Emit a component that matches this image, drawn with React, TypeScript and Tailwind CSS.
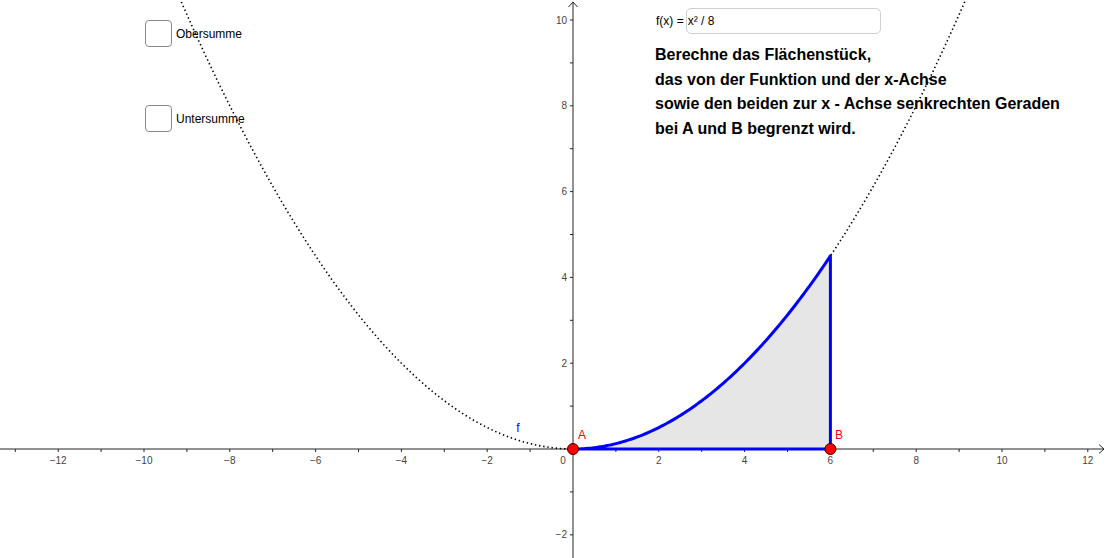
import React from "react";

const U = 42.9;
const OX = 573;
const OY = 449;
const sx = (x: number) => OX + x * U;
const sy = (y: number) => OY - y * U;
const f = (x: number) => (x * x) / 8;

function curve(from: number, to: number, step = 0.05) {
  const pts: string[] = [];
  for (let x = from; x <= to + 1e-9; x += step) {
    pts.push(`${sx(x).toFixed(2)},${sy(f(x)).toFixed(2)}`);
  }
  return "M" + pts.join(" L");
}

const Checkbox = ({ label }: { label: string }) => (
  <div className="flex items-center gap-1">
    <div className="w-[27px] h-[27px] rounded-[4px] border-[1.5px] border-[#8a8a8a] bg-white" />
    <span className="text-[12px] text-black">{label}</span>
  </div>
);

const Graph = () => {
  const xTicks: number[] = [];
  for (let i = -13; i <= 12; i++) if (i !== 0) xTicks.push(i);
  const yTicks: number[] = [];
  for (let i = -2; i <= 10; i++) if (i !== 0) yTicks.push(i);
  const area = curve(0, 6) + ` L${sx(6)},${sy(0)} L${sx(0)},${sy(0)} Z`;

  return (
    <svg width={1106} height={558} className="absolute inset-0">
      {/* axes */}
      <g stroke="#252525" strokeWidth={1} fill="none">
        <line x1={0} y1={OY} x2={1104} y2={OY} />
        <line x1={OX} y1={558} x2={OX} y2={2} />
        <path d="M1099,444.5 L1104,449 L1099,453.5" />
        <path d="M568.5,7 L573,2 L577.5,7" />
        {xTicks.map((i) => (
          <line key={i} x1={sx(i)} y1={OY} x2={sx(i)} y2={OY + 3} />
        ))}
        {yTicks.map((i) => (
          <line key={i} x1={OX - 3} y1={sy(i)} x2={OX} y2={sy(i)} />
        ))}
      </g>
      <g fill="#444" fontSize={10} fontFamily="'Liberation Sans', Arial, sans-serif">
        {xTicks
          .filter((i) => i % 2 === 0)
          .map((i) => (
            <text key={i} x={sx(i)} y={464} textAnchor="middle">
              {i < 0 ? `\u2212${-i}` : i}
            </text>
          ))}
        <text x={563} y={464} textAnchor="middle">0</text>
        {yTicks
          .filter((i) => i % 2 === 0)
          .map((i) => (
            <text key={i} x={567} y={sy(i) + 3.5} textAnchor="end">
              {i < 0 ? `\u2212${-i}` : i}
            </text>
          ))}
      </g>

      {/* area */}
      <path d={area} fill="#e6e6e6" stroke="none" />

      {/* dotted parabola */}
      <path
        d={curve(-13.5, 12.5)}
        fill="none"
        stroke="#000"
        strokeWidth={1.6}
        strokeDasharray="1.4 2.8"
      />

      {/* boundary */}
      <path d={area} fill="none" stroke="#0000ff" strokeWidth={3} strokeLinejoin="round" />

      {/* points */}
      <circle cx={sx(0)} cy={OY} r={5.5} fill="#ff0000" stroke="#3a0000" strokeWidth={1} />
      <circle cx={sx(6)} cy={OY} r={5.5} fill="#ff0000" stroke="#3a0000" strokeWidth={1} />
      <g fontSize={12} fontFamily="'Liberation Sans', Arial, sans-serif">
        <text x={582} y={439} fill="#ff0000" textAnchor="middle">A</text>
        <text x={839} y={439} fill="#ff0000" textAnchor="middle">B</text>
        <text x={518} y={432} fill="#0000ff" textAnchor="middle">f</text>
      </g>
    </svg>
  );
};

export default function App() {
  return (
    <div
      className="relative w-[1106px] h-[558px] bg-white overflow-hidden"
      style={{ fontFamily: "'Liberation Sans', Arial, sans-serif" }}
    >
      <Graph />

      {/* checkboxes on the canvas */}
      <div className="absolute left-[145px] top-[20px] flex flex-col gap-[58px]">
        <Checkbox label="Obersumme" />
        <Checkbox label="Untersumme" />
      </div>

      {/* input + task text */}
      <div className="absolute left-[655px] top-[8px] flex flex-col gap-[9px]">
        <div className="flex items-center gap-[2px] pl-px">
          <span className="text-[12px] text-black">f(x) =</span>
          <div className="w-[195px] h-[26px] rounded-[5px] border border-[#d0d0d0] bg-white flex items-center pl-[1px] text-[12px] text-black">
            x² / 8
          </div>
        </div>
        <div className="font-bold text-[16px] leading-[24.5px] text-black">
          <p>Berechne das Flächenstück,</p>
          <p>das von der Funktion und der x-Achse</p>
          <p>sowie den beiden zur x - Achse senkrechten Geraden</p>
          <p>bei A und B begrenzt wird.</p>
        </div>
      </div>
    </div>
  );
}
